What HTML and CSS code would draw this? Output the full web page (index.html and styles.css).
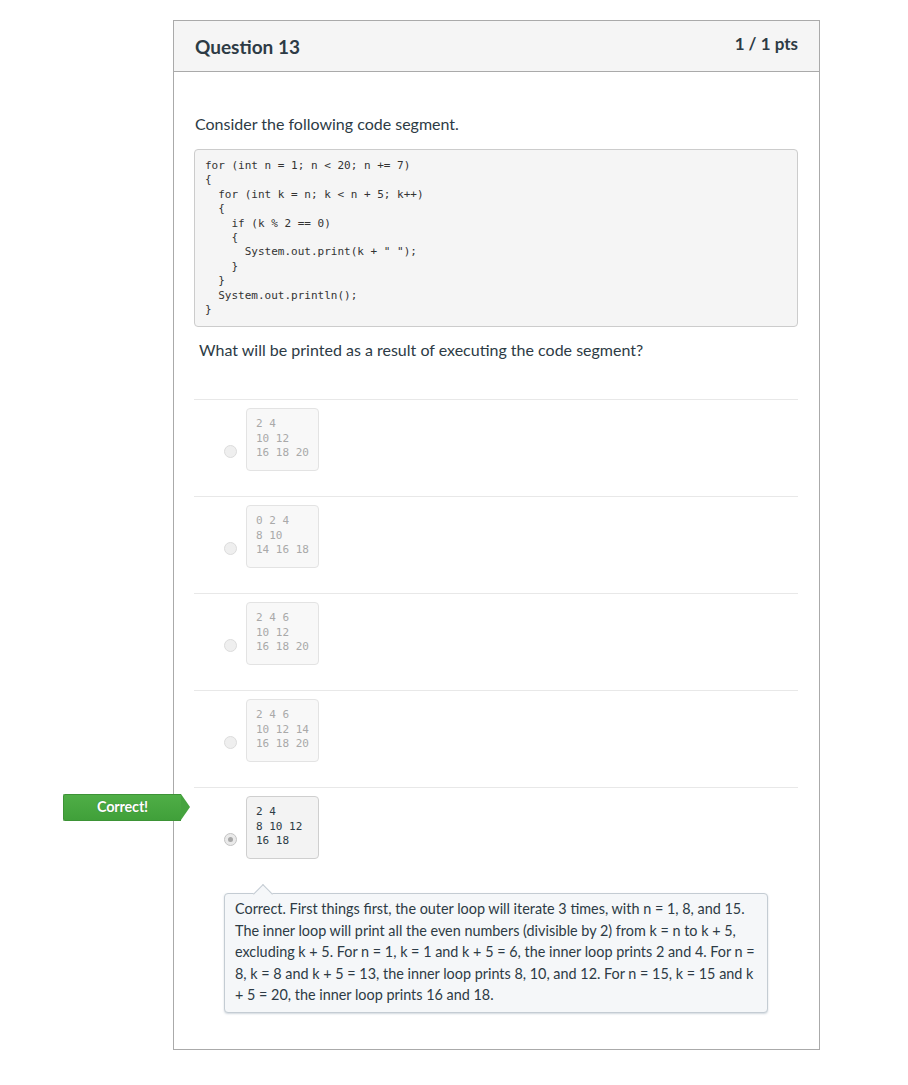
FILE: index.html
```html
<!DOCTYPE html>
<html lang="en">
<head>
<meta charset="utf-8">
<title>Question 13</title>
<link rel="stylesheet" href="styles.css">
</head>
<body>
<div class="question">
  <div class="q-header">
    <h2 class="q-title">Question 13</h2>
    <span class="q-pts">1 / 1 pts</span>
  </div>
  <div class="q-body">
    <p class="q-text">Consider the following code segment.</p>
<pre class="code">for (int n = 1; n &lt; 20; n += 7)
{
  for (int k = n; k &lt; n + 5; k++)
  {
    if (k % 2 == 0)
    {
      System.out.print(k + " ");
    }
  }
  System.out.println();
}</pre>
    <p class="q-prompt">What will be printed as a result of executing the code segment?</p>

    <div class="answers">
      <div class="answer">
        <span class="radio"></span>
        <pre class="ans-box">2 4
10 12
16 18 20</pre>
      </div>
      <div class="answer">
        <span class="radio"></span>
        <pre class="ans-box">0 2 4
8 10
14 16 18</pre>
      </div>
      <div class="answer">
        <span class="radio"></span>
        <pre class="ans-box">2 4 6
10 12
16 18 20</pre>
      </div>
      <div class="answer">
        <span class="radio"></span>
        <pre class="ans-box">2 4 6
10 12 14
16 18 20</pre>
      </div>
      <div class="answer answer-correct">
        <span class="badge">Correct!</span>
        <span class="radio radio-checked"></span>
        <pre class="ans-box">2 4
8 10 12
16 18</pre>
      </div>
      <div class="feedback">Correct. First things first, the outer loop will iterate 3 times, with n = 1, 8, and 15. The inner loop will print all the even numbers (divisible by 2) from k = n to k + 5, excluding k + 5. For n = 1, k = 1 and k + 5 = 6, the inner loop prints 2 and 4. For n = 8, k = 8 and k + 5 = 13, the inner loop prints 8, 10, and 12. For n = 15, k = 15 and k + 5 = 20, the inner loop prints 16 and 18.</div>
    </div>
  </div>
</div>
</body>
</html>
```
FILE: styles.css
```css
html, body {
  margin: 0;
  padding: 0;
  background: #fff;
}
body {
  font-family: Lato, "Open Sans", sans-serif;
  color: #2d3b45;
}
.question {
  margin: 20px 0 0 173px;
  width: 645px;
  border: 1px solid #aaaaaa;
  background: #fff;
}
.q-header {
  height: 50px;
  background: #f5f5f5;
  border-bottom: 1px solid #aaaaaa;
  display: flex;
  align-items: center;
  justify-content: space-between;
  padding: 0 21px 0 21px;
}
.q-title {
  margin: 0;
  font-size: 19px;
  font-weight: 700;
  color: #2d3b45;
}
.q-pts {
  font-size: 17px;
  font-weight: 700;
  color: #2d3b45;
  position: relative;
  top: -3px;
}
.q-body {
  padding: 42px 21px 36px 20px;
}
.q-text {
  margin: 0 0 15px 1px;
  font-size: 16px;
  line-height: 20px;
}
.code {
  margin: 0;
  background: #f5f5f5;
  border: 1px solid #cccccc;
  border-radius: 4px;
  padding: 9px 10px 9px 10px;
  font-family: "DejaVu Sans Mono", "Liberation Mono", monospace;
  font-size: 11px;
  line-height: 14.4px;
  color: #333;
}
.q-prompt {
  margin: 13px 0 39px 5px;
  font-size: 16px;
  line-height: 20px;
}
.answers {
  display: flex;
  flex-direction: column;
}
.answer {
  position: relative;
  display: flex;
  align-items: flex-end;
  gap: 9px;
  border-top: 1px solid #e8e8e8;
  padding: 8px 0 25px 30px;
}
.radio {
  flex: none;
  width: 11px;
  height: 11px;
  border-radius: 50%;
  border: 1px solid #dcdcdc;
  background: #efefef;
  margin-bottom: 13px;
}
.radio-checked {
  position: relative;
  border-color: #c4c4c4;
  background: #eaeaea;
}
.radio-checked::after {
  content: "";
  position: absolute;
  left: 3px;
  top: 3px;
  width: 5px;
  height: 5px;
  border-radius: 50%;
  background: #a8a8a8;
}
.ans-box {
  margin: 0;
  box-sizing: border-box;
  min-width: 73px;
  padding: 8px 9px 9.5px 9px;
  background: #f8f8f8;
  border: 1px solid #e3e3e3;
  border-radius: 4px;
  font-family: "DejaVu Sans Mono", "Liberation Mono", monospace;
  font-size: 11px;
  line-height: 14.5px;
  color: #a9a9a9;
}
.answer-correct .ans-box {
  background: #f3f3f3;
  border-color: #cfcfcf;
  color: #2d3b45;
}
.answer-correct {
  padding-bottom: 0;
}
.badge {
  position: absolute;
  left: -131px;
  top: 6px;
  width: 118px;
  height: 27px;
  box-sizing: border-box;
  background: linear-gradient(#4fae46, #40a03a);
  border: 1px solid #3d9336;
  border-right: none;
  border-radius: 2px 0 0 2px;
  color: #fff;
  font-size: 14.5px;
  font-weight: 700;
  line-height: 23px;
  text-align: center;
  text-shadow: 0 0 1px rgba(0,0,0,0.35);
  letter-spacing: -0.2px;
}
.badge::after {
  content: "";
  position: absolute;
  right: -9px;
  top: -1px;
  width: 0;
  height: 0;
  border-top: 13.5px solid transparent;
  border-bottom: 13.5px solid transparent;
  border-left: 9px solid #45a33e;
}
.feedback {
  position: relative;
  margin: 34px 30px 0 30px;
  background: #f5f7f9;
  border: 1px solid #c4ccd3;
  border-radius: 4px;
  box-shadow: 0 1px 2px rgba(120,140,160,0.35);
  padding: 4px 10px 6px 10px;
  font-size: 14.4px;
  line-height: 21.5px;
  color: #2d3b45;
}
.feedback::before {
  content: "";
  position: absolute;
  left: 31px;
  top: -7px;
  width: 13px;
  height: 13px;
  background: #f5f7f9;
  border-left: 1px solid #c4ccd3;
  border-top: 1px solid #c4ccd3;
  transform: rotate(45deg);
}
```
